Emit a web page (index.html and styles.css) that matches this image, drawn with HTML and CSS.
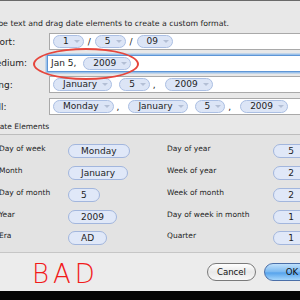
FILE: index.html
```html
<!DOCTYPE html>
<html lang="en">
<head>
  <meta charset="UTF-8" />
  <meta name="viewport" content="width=device-width, initial-scale=1.0" />
  <title>Custom Date Format</title>
  <link rel="stylesheet" href="styles.css">
</head>
<body>
  <div class="dialog">
    <p class="intro">Type text and drag date elements to create a custom format.</p>

    <div class="formats">
      <div class="format-row">
        <span class="format-label">Short:</span>
        <div class="field">
          <span class="token">1</span><span class="sep">/</span><span class="token">5</span><span class="sep">/</span><span class="token">09</span>
        </div>
      </div>
      <div class="format-row">
        <span class="format-label">Medium:</span>
        <div class="field focused">
          <span class="plain">Jan 5,</span><span class="token">2009</span>
        </div>
      </div>
      <div class="format-row">
        <span class="format-label">Long:</span>
        <div class="field">
          <span class="token">January</span><span class="space"></span><span class="token">5</span><span class="sep comma">,</span><span class="token">2009</span>
        </div>
      </div>
      <div class="format-row">
        <span class="format-label">Full:</span>
        <div class="field">
          <span class="token">Monday</span><span class="sep comma">,</span><span class="token">January</span><span class="space"></span><span class="token">5</span><span class="sep comma">,</span><span class="token">2009</span>
        </div>
      </div>
    </div>

    <div class="elements-title">Date Elements</div>
    <div class="elements-box">
      <div class="element-grid">
        <span class="el-label">Day of week</span><span><span class="chip">Monday</span></span>
        <span class="el-label">Day of year</span><span><span class="chip wide">5</span></span>

        <span class="el-label">Month</span><span><span class="chip">January</span></span>
        <span class="el-label">Week of year</span><span><span class="chip wide">2</span></span>

        <span class="el-label">Day of month</span><span><span class="chip">5</span></span>
        <span class="el-label">Week of month</span><span><span class="chip wide">2</span></span>

        <span class="el-label">Year</span><span><span class="chip">2009</span></span>
        <span class="el-label">Day of week in month</span><span><span class="chip wide">1</span></span>

        <span class="el-label">Era</span><span><span class="chip">AD</span></span>
        <span class="el-label">Quarter</span><span><span class="chip wide">1</span></span>
      </div>
    </div>

    <div class="footer">
      <span class="bad">BAD</span>
      <div class="buttons">
        <button class="btn">Cancel</button>
        <button class="btn btn-default">OK</button>
      </div>
    </div>
  </div>
  <div class="screen-edge"></div>

  <!-- annotation drawn over the Medium field -->
  <div class="ring"></div>
</body>
</html>
```

FILE: styles.css
```css
html, body {
  margin: 0;
  width: 300px;
  height: 300px;
  overflow: hidden;
}

body {
  position: relative;
  background: #e8e8e8;
  color: #1e1e1e;
  font-family: "DejaVu Sans", sans-serif;
}

.dialog {
  margin-left: -14px;
  width: 340px;
  height: 291px;
  border-top: 1px solid #6a6a6a;
  box-sizing: border-box;
  display: flex;
  flex-direction: column;
}

.intro {
  margin: 0;
  padding: 17px 0 0 4px;
  height: 15px;
  line-height: 12px;
  font-size: 7.8px;
  white-space: nowrap;
}

.formats {
  display: flex;
  flex-direction: column;
  gap: 4.7px;
}

.format-row {
  display: flex;
  align-items: center;
}

.format-label {
  width: 61px;
  padding-left: 2px;
  font-size: 9px;
}

.field {
  flex: 1;
  height: 17px;
  box-sizing: border-box;
  background: #fff;
  border: 1px solid #a9a9a9;
  display: flex;
  align-items: center;
  padding-left: 3px;
  font-size: 9px;
}

.field.focused {
  margin-left: -2px;
  padding-left: 3px;
  border-color: #5e96d6;
  box-shadow: 0 0 0 1.5px #9bc1ea;
}

.plain {
  margin-right: 7px;
}

.token {
  display: inline-flex;
  align-items: center;
  height: 11px;
  padding: 0 3px 0 9px;
  border: 1px solid #abbfe3;
  border-radius: 7px;
  background: #dce5f6;
  line-height: 11px;
}

.token::after {
  content: "";
  margin-left: 5px;
  width: 0;
  height: 0;
  border-left: 3px solid transparent;
  border-right: 3px solid transparent;
  border-top: 3px solid #b3bfd5;
}

.sep {
  margin: 0 4px;
}

.sep.comma {
  margin: 0 9px 0 3px;
}

.space {
  width: 7px;
}

.elements-title {
  margin-top: 5px;
  padding-left: 8px;
  height: 14px;
  line-height: 14px;
  font-size: 7.5px;
}

.elements-box {
  border-top: 1px solid #bdbdbd;
  border-bottom: 1px solid #c6c6c6;
  background: #e3e3e3;
  padding: 3px 0 5px;
}

.element-grid {
  display: grid;
  grid-template-columns: 82px 99px 106px auto;
  grid-auto-rows: 21.75px;
  align-items: center;
}

.el-label {
  padding-left: 13px;
  font-size: 7.5px;
}

.element-grid .el-label:nth-child(4n + 3) {
  padding-left: 0;
}

.chip {
  display: inline-block;
  height: 12px;
  line-height: 12px;
  padding: 0 12px;
  border: 1px solid #a2b6dd;
  border-radius: 7px;
  background: #e0e8f8;
  font-size: 9px;
  text-align: center;
}

.chip.wide {
  min-width: 14px;
  padding: 0 12px 0 10px;
}

.footer {
  flex: 1;
  background: #ececec;
  display: flex;
  align-items: center;
  padding: 0 0 0 46px;
}

.bad {
  color: #f21a1a;
  font-family: "DejaVu Sans", sans-serif;
  font-weight: 200;
  font-size: 26px;
  letter-spacing: 4px;
  margin-top: 5px;
}

.buttons {
  margin-left: auto;
  display: flex;
  gap: 8px;
  padding-right: 6px;
}

.btn {
  height: 18px;
  padding: 0 9px;
  border: 1px solid #7a7a7a;
  border-radius: 9px;
  background: linear-gradient(#ffffff, #e9e9e9 50%, #f7f7f7);
  font-family: "DejaVu Sans", sans-serif;
  font-size: 8.6px;
  color: #111;
}

.btn-default {
  width: 56px;
  border-color: #4b6fa8;
  background: linear-gradient(#bfe0fb, #7ab8f0 50%, #56a3ec 55%, #a5d6fb);
}

.screen-edge {
  height: 9px;
  background: #050505;
}

.ring {
  position: absolute;
  left: 33px;
  top: 48px;
  width: 102px;
  height: 28px;
  border: 2px solid #e6463c;
  border-radius: 50%;
}
```
